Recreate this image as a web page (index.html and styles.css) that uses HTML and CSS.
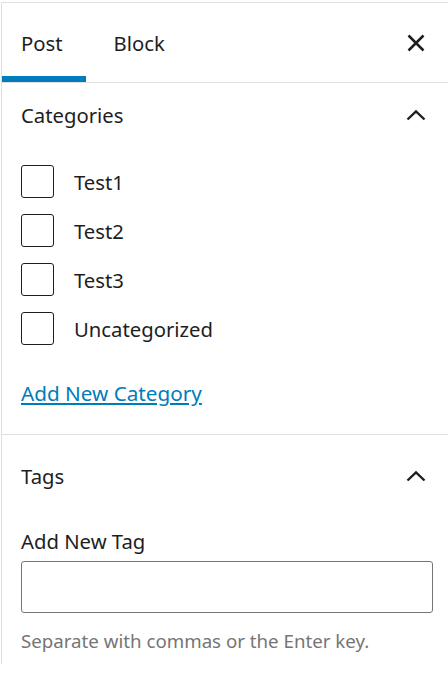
FILE: index.html
```
<!DOCTYPE html>
<html>
  <head>
    <title>Post settings</title>
    <link rel="stylesheet" href="styles.css">
  </head>
  <body>
    <div id="sidebar">
      <div id="tabbar">
        <div class="tab active">Post</div>
        <div class="tab">Block</div>
        <button class="iconbtn close" aria-label="Close settings">
          <svg width="24" height="24" viewBox="0 0 24 24"><path d="M4.5 4.5 L19.5 19.5 M19.5 4.5 L4.5 19.5" stroke="#1e1e1e" stroke-width="2.5" fill="none"/></svg>
        </button>
      </div>

      <div class="panel">
        <div class="panel-head">
          <span>Categories</span>
          <button class="iconbtn" aria-label="Collapse">
            <svg width="24" height="24" viewBox="0 0 24 24"><path d="M3.5 16.5 L12 8.5 L20.5 16.5" stroke="#1e1e1e" stroke-width="2.4" fill="none"/></svg>
          </button>
        </div>
        <div class="cats">
          <label class="cat"><span class="box"></span> Test1</label>
          <label class="cat"><span class="box"></span> Test2</label>
          <label class="cat"><span class="box"></span> Test3</label>
          <label class="cat"><span class="box"></span> Uncategorized</label>
        </div>
        <a class="addlink" href="#">Add New Category</a>
      </div>

      <div class="panel tags">
        <div class="panel-head">
          <span>Tags</span>
          <button class="iconbtn" aria-label="Collapse">
            <svg width="24" height="24" viewBox="0 0 24 24"><path d="M3.5 16.5 L12 8.5 L20.5 16.5" stroke="#1e1e1e" stroke-width="2.4" fill="none"/></svg>
          </button>
        </div>
        <label class="fieldlabel" for="newtag">Add New Tag</label>
        <input type="text" id="newtag">
        <p class="help">Separate with commas or the Enter key.</p>
      </div>
    </div>
  </body>
</html>
```

FILE: styles.css
```
body {
  margin: 0;
  background: white;
  color: #1e1e1e;
  font-family: "Noto Sans", "Open Sans", sans-serif;
}

#sidebar {
  margin: 2px 0 0 1px;
  border-top: 1px solid #e0e0e0;
  border-left: 1px solid #e0e0e0;
}

#tabbar {
  display: flex;
  align-items: center;
  height: 79px;
  border-bottom: 1px solid #e0e0e0;
  padding-right: 14px;
}

.tab {
  display: flex;
  align-items: center;
  height: 100%;
  box-sizing: border-box;
  padding: 0 23px 0 19px;
  font-size: 20.3px;
}

.tab + .tab {
  margin-left: 9px;
}

.tab.active {
  box-shadow: inset 0 -6px 0 #007cba;
}

.iconbtn {
  border: 0;
  background: none;
  padding: 0;
  width: 36px;
  height: 36px;
  display: flex;
  align-items: center;
  justify-content: center;
  cursor: pointer;
}

.close {
  margin-left: auto;
}

.panel {
  padding: 0 15px 27px 19px;
  border-bottom: 1px solid #e0e0e0;
}

.panel-head {
  display: flex;
  align-items: center;
  justify-content: space-between;
  height: 64px;
  font-size: 20.3px;
  margin-right: -1px;
}

.cats {
  display: flex;
  flex-direction: column;
  gap: 16px;
  margin-top: 18px;
}

.cat {
  display: flex;
  align-items: center;
  gap: 20px;
  font-size: 20.3px;
  height: 33px;
}

.box {
  width: 31px;
  height: 31px;
  border: 1px solid #1e1e1e;
  border-radius: 3px;
}

.addlink {
  display: inline-block;
  margin-top: 34px;
  line-height: 28px;
  font-size: 20.7px;
  color: #007cba;
}

.tags {
  padding-top: 9px;
  padding-bottom: 11px;
  border-bottom: 0;
}

.fieldlabel {
  display: block;
  margin-top: 19px;
  line-height: 28px;
  font-size: 20.3px;
}

#newtag {
  display: block;
  box-sizing: border-box;
  width: 100%;
  height: 52px;
  margin-top: 6px;
  border: 1px solid #757575;
  border-radius: 3px;
  font-size: 18px;
}

.help {
  margin: 16px 0 0;
  line-height: 24px;
  font-size: 18.7px;
  color: #757575;
}
```
